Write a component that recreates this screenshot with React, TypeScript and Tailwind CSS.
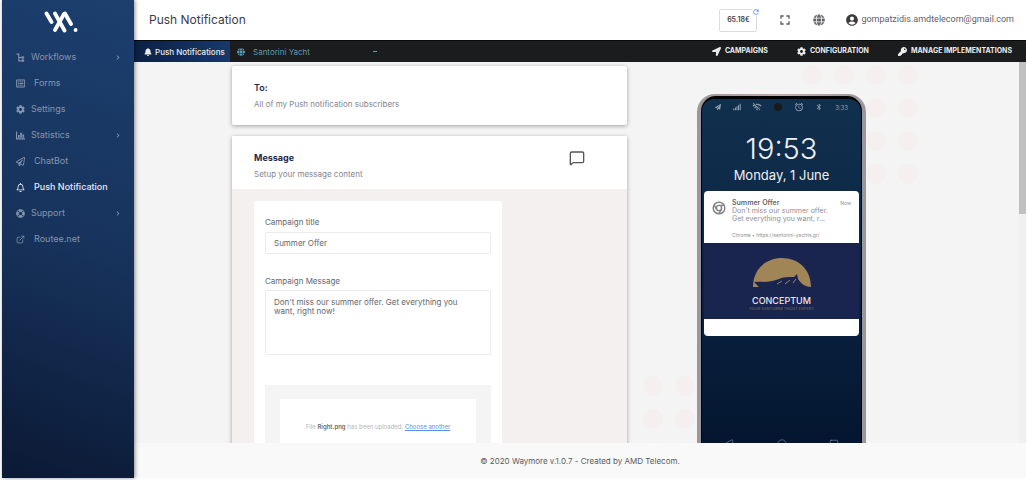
import React from 'react';
import {
  FaBell,
  FaCog,
  FaChevronRight,
  FaGlobe,
  FaKey,
  FaLifeRing,
  FaLocationArrow,
  FaPaperPlane,
  FaRegBell,
  FaRegListAlt,
  FaRegPaperPlane,
  FaSignal,
} from 'react-icons/fa';
import { MdAccountCircle, MdAlarm, MdBluetooth, MdFullscreen, MdRefresh, MdWifiOff } from 'react-icons/md';
import { Circle, ExternalLink, MessageSquare, Square, Triangle } from 'lucide-react';

type IconProps = { className?: string };

function WorkflowIcon({ className }: IconProps) {
  return (
    <svg viewBox="0 0 16 16" className={className} fill="none" stroke="currentColor" strokeWidth="2">
      <path d="M1 2 H5 V14 H9" />
      <path d="M5 8 H9" />
      <path d="M10 6.5 H14 V9.5 H10 Z M10 12 H14 V15 H10 Z" fill="currentColor" strokeWidth="1" />
    </svg>
  );
}

function StatsIcon({ className }: IconProps) {
  return (
    <svg viewBox="0 0 16 16" className={className} fill="currentColor">
      <path d="M0 1 H2 V13 H16 V15 H0 Z" />
      <path d="M3.5 7 H6.5 V12 H3.5 Z M7.5 3 H10.5 V12 H7.5 Z M11.5 6 H14.5 V12 H11.5 Z" />
    </svg>
  );
}

const menu = [
  { label: 'Workflows', icon: WorkflowIcon, wide: false, arrow: true },
  { label: 'Forms', icon: FaRegListAlt, wide: true, arrow: false },
  { label: 'Settings', icon: FaCog, wide: false, arrow: false },
  { label: 'Statistics', icon: StatsIcon, wide: false, arrow: true },
  { label: 'ChatBot', icon: FaRegPaperPlane, wide: true, arrow: false },
  { label: 'Push Notification', icon: FaRegBell, wide: true, arrow: false, active: true },
  { label: 'Support', icon: FaLifeRing, wide: false, arrow: true },
  { label: 'Routee.net', icon: ExternalLink, wide: true, arrow: false },
];

function Logo() {
  return (
    <svg viewBox="0 0 34 22" className="w-[34px] h-[22px]" fill="none" stroke="white" strokeWidth="3.8" strokeLinecap="round">
      <path d="M2.5 2.5 L7.5 11" />
      <path d="M11 2.5 L20.5 19.5" />
      <path d="M20 3 L11 19" />
      <path d="M21 2.5 L27 13" />
      <path d="M31.5 19 h.1" />
    </svg>
  );
}

function Sidebar() {
  return (
    <aside className="w-[132px] shrink-0 z-10 bg-[linear-gradient(200deg,#1c3f6e,#17335c_50%,#0b1934)] shadow-[1px_0_4px_rgba(0,0,0,0.45)]">
      <div className="h-11 pl-[42px] pt-[11px]">
        <Logo />
      </div>
      <nav>
        {menu.map(({ label, icon: Icon, wide, arrow, active }) => (
          <a
            key={label}
            href="#"
            className={`h-[26px] flex items-center px-3.5 text-[9px] ${active ? 'text-[#e6ebf2] font-medium' : 'text-[#8595ae]'}`}
          >
            <Icon className="w-[9px] h-[9px] shrink-0" />
            <span className={`flex-1 whitespace-nowrap ${wide ? 'pl-[9px]' : 'pl-1.5'}`}>{label}</span>
            {arrow && <FaChevronRight className="w-1 h-[5px]" />}
          </a>
        ))}
      </nav>
    </aside>
  );
}

function Header() {
  return (
    <header className="h-10 shrink-0 flex items-center bg-white pl-[15px] pr-3 text-[#3c3c46]">
      <h1 className="flex-1 text-[12px]">Push Notification</h1>
      <div className="relative w-[38px] h-[23px] rounded-xs border border-[#dcdcdc] flex items-center justify-center text-[7px] font-semibold">
        65.18€
        <button aria-label="Refresh balance" className="absolute -top-0.5 -right-1 bg-white text-[#4b8fe8]">
          <MdRefresh className="w-2 h-2" />
        </button>
      </div>
      <button aria-label="Fullscreen" className="ml-5 text-[#5c5c60]">
        <MdFullscreen className="w-4 h-4" />
      </button>
      <button aria-label="Language" className="ml-5 text-[#66666a]">
        <FaGlobe className="w-3 h-3" />
      </button>
      <a href="#" className="ml-5 flex items-center gap-0.5 text-[#60606a]">
        <MdAccountCircle className="w-[14px] h-[14px] text-[#3c3c40]" />
        <span className="font-['Roboto',sans-serif] text-[9px]">gompatzidis.amdtelecom@gmail.com</span>
      </a>
    </header>
  );
}

function ToolBar() {
  return (
    <div className="h-[22px] shrink-0 flex items-center bg-[#1b1c1e] border-t border-[#0a0a0a] pr-3.5 text-[#ececec] text-[7px]">
      <a href="#" className="h-full w-24 flex items-center gap-[3px] pl-2.5 bg-linear-to-r from-[#0c2145] to-[#17386b] text-[8px] font-medium whitespace-nowrap">
        <FaBell className="w-2 h-2 shrink-0" />
        Push Notifications
      </a>
      <label className="flex items-center gap-2 pl-[7px] text-[#5b9bb5]">
        <FaGlobe className="w-2 h-2" aria-label="Site" />
        <select className="w-30 appearance-none bg-transparent text-[8px] outline-none">
          <option>Santorini Yacht</option>
        </select>
        <span className="-ml-2 w-1 h-px bg-[#5b9bb5]" />
      </label>
      <nav className="flex-1 flex justify-end gap-[29px] font-bold">
        <a href="#" className="flex items-center gap-1">
          <FaLocationArrow className="w-[9px] h-[9px]" />
          CAMPAIGNS
        </a>
        <a href="#" className="flex items-center gap-1">
          <FaCog className="w-[9px] h-[9px]" />
          CONFIGURATION
        </a>
        <a href="#" className="flex items-center gap-1">
          <FaKey className="w-[9px] h-[9px]" />
          MANAGE IMPLEMENTATIONS
        </a>
      </nav>
    </div>
  );
}

function MessageForm() {
  return (
    <div className="flex-1 min-w-0 pt-1">
      <section className="h-[59px] bg-white rounded-xs px-[22px] pt-4 shadow-[0_1px_4px_rgba(0,0,0,0.35)]">
        <h2 className="text-[9px] leading-3 font-semibold text-[#1d2750]">To:</h2>
        <p className="mt-1 text-[8px] leading-3 text-[#85858f]">All of my Push notification subscribers</p>
      </section>

      <section className="mt-[11px] bg-[#f4f0ef] rounded-xs shadow-[0_1px_4px_rgba(0,0,0,0.35)]">
        <div className="h-[53px] bg-white flex justify-between pl-[22px] pr-[42px] pt-3.5">
          <div className="pt-0.5">
            <h2 className="text-[9px] leading-3 font-bold text-[#1d2750]">Message</h2>
            <p className="mt-1 text-[8px] leading-3 text-[#85858f]">Setup your message content</p>
          </div>
          <MessageSquare className="w-4 h-4 text-[#55555f]" strokeWidth={2} />
        </div>

        <div className="pt-3 pl-[22px] pr-[125px]">
          <form className="bg-white rounded-t-xs px-[11px] pt-[15px] text-[8px] text-[#66666c]">
            <label htmlFor="title" className="block leading-3">
              Campaign title
            </label>
            <input
              id="title"
              defaultValue="Summer Offer"
              className="mt-1 block w-full h-[22px] rounded-xs border border-[#ececec] px-2 outline-none"
            />
            <label htmlFor="message" className="block mt-[21px] leading-3">
              Campaign Message
            </label>
            <textarea
              id="message"
              defaultValue="Don't miss our summer offer. Get everything you want, right now!"
              className="mt-[3px] block w-full h-[65px] resize-none rounded-xs border border-[#ececec] pl-2 pr-6 pt-[7px] leading-[9px] outline-none"
            />
            <div className="mt-[30px] h-[110px] bg-[#f4f4f4] px-[15px] pt-3.5">
              <p className="h-20 bg-white pt-[22px] text-center text-[6px] leading-3 text-[#b4b4b4]">
                File <b className="font-semibold text-[#6e6e6e]">Right.png</b> has been uploaded.{' '}
                <a href="#" className="text-[#5b8def] underline">
                  Choose another
                </a>
              </p>
            </div>
          </form>
        </div>
      </section>
    </div>
  );
}

function Dots({ className }: { className: string }) {
  return (
    <div className={`absolute w-[116px] grid grid-cols-4 gap-x-3 gap-y-[13px] ${className}`}>
      {Array.from({ length: 16 }, (_, i) => (
        <span key={i} className="w-5 h-5 rounded-full bg-[#f5f0ef]" />
      ))}
    </div>
  );
}

function YachtLogo() {
  return (
    <svg viewBox="0 0 60 31" className="w-[60px] h-[31px]">
      <path
        d="M1 30 C1 12 14 1 30 1 C46 1 59 12 59 30 C54 30 49 27 46 22 L45 17 L42 20 C36 20 31 20 27 22 C20 25 12 25 2 25 L7 30 Z"
        fill="#a08557"
      />
      <path d="M25 27 l5 -3 M33 27 l5 -4 M41 26 l3 -4" stroke="#a08557" strokeWidth="1" />
    </svg>
  );
}

function Phone() {
  return (
    <div className="relative w-[169px] shrink-0 pt-8">
      <Dots className="top-[3px] left-[105px]" />
      <Dots className="top-[314px] -left-[54px]" />
      <div className="relative h-[370px] rounded-t-[18px] bg-linear-to-r from-[#9a969b] via-[#c5a9ab] to-[#9a969b] px-1 pt-0.5">
        <div className="h-full rounded-t-[15px] bg-black px-px pt-[3px]">
          <div className="h-full rounded-t-xl overflow-hidden bg-linear-to-b from-[#11304e] via-[#0a2444] to-[#04142c] px-0.5 text-[#f0f0f0]">
            <div className="h-4 flex items-center justify-between px-[11px] text-[6px] text-[#8fa0b2]">
              <FaPaperPlane className="w-1.5 h-1.5" />
              <FaSignal className="w-2 h-2" />
              <MdWifiOff className="w-2.5 h-2.5" />
              <span className="w-2 h-2 rounded-full bg-[#1a1a1c]" />
              <MdAlarm className="w-2.5 h-2.5" />
              <MdBluetooth className="w-2 h-2" />
              <span>3:33</span>
            </div>
            <p className="mt-4 text-center text-[29px] leading-9 font-light">19:53</p>
            <p className="text-center text-[13px] leading-4">Monday, 1 June</p>

            <div className="mt-2 rounded bg-white overflow-hidden text-[7px] text-[#8f8f94]">
              <div className="h-[52px] flex gap-1.5 px-2 pt-2">
                <svg viewBox="0 0 24 24" className="w-3.5 h-3.5 mt-0.5 shrink-0" fill="none" stroke="#858589" strokeWidth="2.5">
                  <circle cx="12" cy="12" r="10" />
                  <circle cx="12" cy="12" r="4.5" />
                  <path d="M12 7.5 H21 M8 14.5 L3.5 7 M16 14.5 L11.5 22" />
                </svg>
                <div className="flex-1 whitespace-nowrap leading-2">
                  <p className="flex justify-between">
                    <b className="font-semibold text-[#66666b]">Summer Offer</b>
                    <span className="text-[5px]">Now</span>
                  </p>
                  <p>Don't miss our summer offer.</p>
                  <p>Get everything you want, r...</p>
                  <p className="mt-2 text-[5px]">Chrome • https://santorini-yachts.gr/</p>
                </div>
              </div>
              <div className="h-[76px] bg-[#19254f] flex flex-col items-center pt-3.5 text-[#e8e8ee]">
                <YachtLogo />
                <p className="mt-[7px] text-[9px] leading-3 font-medium">CONCEPTUM</p>
                <p className="text-[4px] leading-1 text-[#7a6d62]">YOUR SANTORINI YACHT EXPERT</p>
              </div>
              <div className="h-[17px]" />
            </div>

            <div className="mt-[103px] flex justify-between px-5 text-[#66748a]">
              <Triangle className="w-2.5 h-2.5 -rotate-90" />
              <Circle className="w-2.5 h-2.5" />
              <Square className="w-2.5 h-2.5" />
            </div>
          </div>
        </div>
      </div>
    </div>
  );
}

export default function App() {
  return (
    <div className="h-screen overflow-hidden flex bg-white px-0.5 pb-0.5 font-['Inter',sans-serif]">
      <Sidebar />
      <div className="flex-1 min-w-0 flex flex-col">
        <Header />
        <ToolBar />
        <div className="flex-1 min-h-0 flex bg-[#f4f4f4]">
          <main className="flex-1 min-w-0 overflow-hidden flex gap-[70px] pl-[98px] pr-[153px]">
            <MessageForm />
            <Phone />
          </main>
          <div className="w-[7px] bg-[#f0f0f0]">
            <div className="h-2/5 bg-[#c1c1c1]" />
          </div>
        </div>
        <footer className="h-[35px] shrink-0 flex items-center justify-center bg-[#f9f9f9] text-[8px] text-[#5a5a60]">
          © 2020 Waymore v.1.0.7 - Created by AMD Telecom.
        </footer>
      </div>
    </div>
  );
}
